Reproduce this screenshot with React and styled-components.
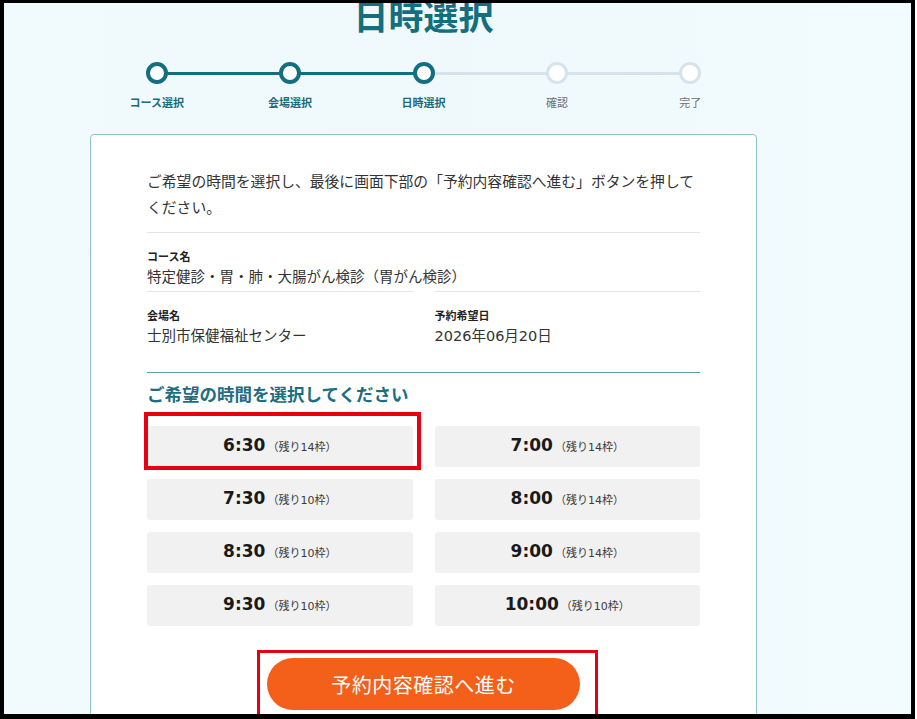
import React from 'react';
import styled, { createGlobalStyle } from 'styled-components';

const GlobalStyle = createGlobalStyle`
  html, body {
    margin: 0;
    padding: 0;
    background: #ffffff;
  }
  body {
    font-family: "DejaVu Sans", "Noto Sans CJK JP", sans-serif;
    color: #333333;
  }
`;

const steps = [
  { label: 'コース選択', done: true },
  { label: '会場選択', done: true },
  { label: '日時選択', done: true },
  { label: '確認', done: false },
  { label: '完了', done: false },
];

const slots = [
  { time: '6:30', left: 14 },
  { time: '7:00', left: 14 },
  { time: '7:30', left: 10 },
  { time: '8:00', left: 14 },
  { time: '8:30', left: 10 },
  { time: '9:00', left: 14 },
  { time: '9:30', left: 10 },
  { time: '10:00', left: 10 },
];

const App = () => {
  return (
    <>
      <GlobalStyle />
      <Frame>
        <Page>
          <Column>
            <Title>日時選択</Title>
            <Stepper>
              {steps.map((step, i) => (
                <Step
                  key={step.label}
                  $last={i === steps.length - 1}
                  $lineActive={steps[i + 1] ? steps[i + 1].done : false}
                >
                  <Dot $active={step.done} />
                  <StepLabel $active={step.done}>{step.label}</StepLabel>
                </Step>
              ))}
            </Stepper>
            <Card>
              <Intro>
                ご希望の時間を選択し、最後に画面下部の「予約内容確認へ進む」ボタンを押してください。
              </Intro>
              <InfoBlock>
                <InfoLabel>コース名</InfoLabel>
                <InfoValue>特定健診・胃・肺・大腸がん検診（胃がん検診）</InfoValue>
              </InfoBlock>
              <InfoGrid>
                <InfoCell>
                  <InfoLabel>会場名</InfoLabel>
                  <InfoValue>士別市保健福祉センター</InfoValue>
                </InfoCell>
                <InfoCell>
                  <InfoLabel>予約希望日</InfoLabel>
                  <InfoValue>2026年06月20日</InfoValue>
                </InfoCell>
              </InfoGrid>
              <SectionHeading>ご希望の時間を選択してください</SectionHeading>
              <SlotGrid>
                {slots.map((slot) => (
                  <SlotButton key={slot.time}>
                    <SlotTime>{slot.time}</SlotTime>
                    <SlotRest>（残り{slot.left}枠）</SlotRest>
                  </SlotButton>
                ))}
              </SlotGrid>
              <SubmitButton>予約内容確認へ進む</SubmitButton>
            </Card>
          </Column>
        </Page>
        <Highlight $left={140} $top={409} $width={277} $height={58} $thick={4} />
        <Highlight $left={253} $top={647} $width={341} $height={80} $thick={3} />
      </Frame>
    </>
  );
};

const Frame = styled.div`
  position: relative;
  box-sizing: border-box;
  width: 915px;
  height: 719px;
  overflow: hidden;
  border-style: solid;
  border-color: #000000;
  border-width: 3px 4px 5px 4px;
`;

const Page = styled.div`
  height: 100%;
  padding-left: 86px;
  background: linear-gradient(90deg, #f1fafc 0%, #eff9fc 50%, #f2fbfd 100%);
`;

const Column = styled.div`
  display: flex;
  flex-direction: column;
  width: 667px;
`;

const Title = styled.h1`
  margin: -6px 0 0;
  font-family: "Noto Sans CJK JP", sans-serif;
  font-size: 35px;
  line-height: 35px;
  font-weight: 700;
  color: #136e80;
  text-align: center;
`;

const Stepper = styled.div`
  display: flex;
  margin-top: 30px;
`;

const Step = styled.div`
  position: relative;
  flex: 1;
  display: flex;
  flex-direction: column;
  align-items: center;

  &::after {
    content: '';
    display: ${(p) => (p.$last ? 'none' : 'block')};
    position: absolute;
    top: 10px;
    left: 50%;
    width: 100%;
    height: 3px;
    background: ${(p) => (p.$lineActive ? '#136e80' : '#d7e3ec')};
  }
`;

const Dot = styled.span`
  position: relative;
  z-index: 1;
  box-sizing: border-box;
  width: 22px;
  height: 22px;
  border-radius: 50%;
  background: #ffffff;
  border: ${(p) => (p.$active ? '4px solid #136e80' : '3px solid #d7e3ec')};
`;

const StepLabel = styled.span`
  margin-top: 10px;
  font-family: "Noto Sans CJK JP", sans-serif;
  font-size: 11px;
  line-height: 16px;
  font-weight: ${(p) => (p.$active ? 700 : 400)};
  color: ${(p) => (p.$active ? '#1d6b7a' : '#6f6f6f')};
`;

const Card = styled.div`
  margin-top: 24px;
  padding: 33px 56px 40px;
  background: #ffffff;
  border: 1px solid #8fc3c6;
  border-radius: 4px;
`;

const Intro = styled.p`
  margin: 0;
  padding-bottom: 12px;
  border-bottom: 1px solid #e4e4e4;
  font-family: "Noto Sans CJK JP", sans-serif;
  font-size: 14.8px;
  line-height: 26px;
  color: #333333;
`;

const InfoBlock = styled.div`
  display: flex;
  flex-direction: column;
  gap: 3px;
  padding: 15px 0 4px;
`;

const InfoGrid = styled.div`
  display: grid;
  grid-template-columns: 1fr 1fr;
  column-gap: 22px;
  border-bottom: 1px solid #5f9ea8;
`;

const InfoCell = styled.div`
  display: flex;
  flex-direction: column;
  gap: 3px;
  padding: 15px 0 26px;
  border-top: 1px solid #e4e4e4;
`;

const InfoLabel = styled.span`
  font-family: "Noto Sans CJK JP", sans-serif;
  font-size: 11px;
  line-height: 16px;
  font-weight: 700;
  color: #222222;
`;

const InfoValue = styled.span`
  font-size: 14.5px;
  line-height: 20px;
  color: #333333;
`;

const SectionHeading = styled.h2`
  margin: 9px 0 0;
  font-family: "Noto Sans CJK JP", sans-serif;
  font-size: 17.5px;
  line-height: 24px;
  font-weight: 700;
  color: #1d6e80;
`;

const SlotGrid = styled.div`
  display: grid;
  grid-template-columns: 1fr 1fr;
  column-gap: 22px;
  row-gap: 12px;
  margin-top: 20px;
`;

const SlotButton = styled.div`
  display: flex;
  align-items: baseline;
  justify-content: center;
  height: 41px;
  padding-top: 9px;
  box-sizing: border-box;
  background: #f1f1f1;
  border-radius: 3px;
`;

const SlotTime = styled.span`
  font-family: "DejaVu Sans", sans-serif;
  font-size: 17px;
  font-weight: 700;
  color: #1a1a1a;
`;

const SlotRest = styled.span`
  margin-left: 2px;
  font-family: "DejaVu Sans", "Noto Sans CJK JP", sans-serif;
  font-size: 11px;
  color: #3a3a3a;
`;

const SubmitButton = styled.button`
  display: block;
  width: 313px;
  height: 52px;
  margin: 32px auto 0;
  border: none;
  border-radius: 26px;
  background: #f45f19;
  color: #ffffff;
  font-family: "Noto Sans CJK JP", sans-serif;
  font-size: 20px;
  letter-spacing: 0.5px;
  cursor: pointer;
`;

const Highlight = styled.div`
  position: absolute;
  left: ${(p) => p.$left}px;
  top: ${(p) => p.$top}px;
  width: ${(p) => p.$width}px;
  height: ${(p) => p.$height}px;
  box-sizing: border-box;
  border: ${(p) => p.$thick}px solid #e60012;
  pointer-events: none;
`;

export default App;
